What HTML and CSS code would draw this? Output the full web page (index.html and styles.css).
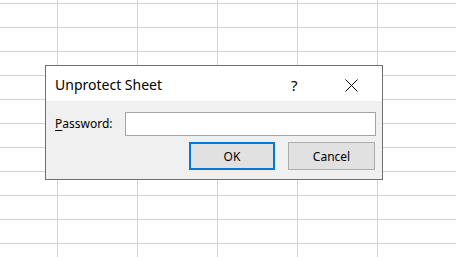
FILE: index.html
```html
<!DOCTYPE html>
<html>
<head>
<meta charset="utf-8">
<link rel="stylesheet" href="styles.css">
</head>
<body>
<div class="sheet">
  <div class="dialog">
    <div class="titlebar">
      <span class="title">Unprotect Sheet</span>
      <span class="help">?</span>
      <span class="close">
        <svg width="13" height="13" viewBox="0 0 13 13"><path d="M0.5 0.5 L12.5 12.5 M12.5 0.5 L0.5 12.5" stroke="#000" stroke-width="1" fill="none"/></svg>
      </span>
    </div>
    <div class="body">
      <div class="row">
        <label class="label"><u>P</u>assword:</label>
        <div class="input"></div>
      </div>
      <div class="buttons">
        <div class="btn btn-default">OK</div>
        <div class="btn btn-cancel">Cancel</div>
      </div>
    </div>
  </div>
</div>
</body>
</html>
```
FILE: styles.css
```css
html, body {
  margin: 0;
  padding: 0;
}
body {
  width: 456px;
  height: 257px;
  overflow: hidden;
  font-family: "Noto Sans", "Open Sans", sans-serif;
}
.sheet {
  position: relative;
  width: 456px;
  height: 257px;
  background-color: #fff;
  background-image:
    linear-gradient(to right, #d4d4d4 1px, transparent 1px),
    linear-gradient(to bottom, #d4d4d4 1px, transparent 1px);
  background-size: 80px 24px, 80px 24px;
  background-position: 57px 0, 0 3px;
}
.dialog {
  position: absolute;
  left: 45px;
  top: 65px;
  width: 336px;
  height: 113px;
  border: 1px solid #6e6e6e;
  background: #f0f0f0;
  display: flex;
  flex-direction: column;
}
.titlebar {
  height: 35px;
  background: #fff;
  display: flex;
  align-items: center;
  padding-left: 9px;
  box-sizing: border-box;
}
.title {
  font-size: 14px;
  color: #000;
  flex: 1;
  line-height: 20px;
  margin-top: 2px;
}
.help {
  font-size: 15px;
  line-height: 20px;
  margin-top: 2px;
  width: 8px;
  margin-right: 46px;
  color: #000;
}
.close {
  width: 13px;
  height: 13px;
  margin-right: 24px;
  margin-top: 3px;
  display: flex;
}
.body {
  flex: 1;
  padding: 11px 6px 0 9px;
  display: flex;
  flex-direction: column;
}
.row {
  display: flex;
  align-items: center;
  justify-content: space-between;
}
.label {
  font-size: 12px;
  color: #000;
  line-height: 16px;
}
.label u {
  text-underline-offset: 2px;
}
.input {
  width: 249px;
  height: 22px;
  border: 1px solid #a5a5a5;
  background: #fff;
}
.buttons {
  display: flex;
  justify-content: flex-end;
  gap: 13px;
  margin-top: 6px;
  padding-right: 1px;
}
.btn {
  width: 85px;
  height: 26px;
  border: 1px solid #adadad;
  background: #e1e1e1;
  font-size: 12px;
  color: #000;
  display: flex;
  align-items: center;
  justify-content: center;
}
.btn-default {
  width: 82px;
  height: 24px;
  border: 2px solid #0078d7;
}
```
